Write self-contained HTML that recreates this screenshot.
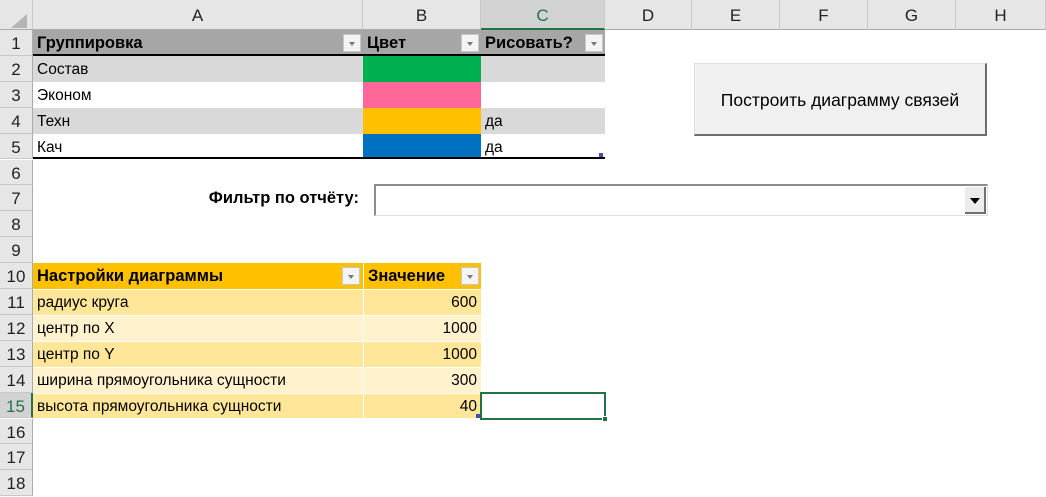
<!DOCTYPE html>
<html><head><meta charset="utf-8"><style>
*{margin:0;padding:0;box-sizing:border-box}
body{width:1046px;height:483px;overflow:hidden;background:#fff;font-family:"Liberation Sans",Arial,sans-serif;font-size:15.5px;color:#000;position:relative}
.a{position:absolute}
.ch{position:absolute;top:0;height:30px;background:#e6e6e6;border-right:1px solid #c8c8c8;border-bottom:1px solid #ababab;text-align:center;line-height:32px;font-size:17px;color:#222}
.rh{position:absolute;left:0;width:33px;height:25.9px;background:#e6e6e6;border-bottom:1px solid #c8c8c8;border-right:1px solid #ababab;text-align:center;line-height:27px;font-size:17px;color:#222}
.c{position:absolute;height:25.9px;line-height:27px;padding-left:4px;white-space:nowrap;overflow:hidden}
.b{font-weight:bold;font-size:16.5px}
.r{text-align:right;padding-right:4px}
.dd{position:absolute;width:18px;height:18px;background:#f4f4f4;border:1px solid #c8c8c8}
.dd:after{content:"";position:absolute;left:5px;top:7px;border-left:3.5px solid transparent;border-right:3.5px solid transparent;border-top:4px solid #777}
</style></head><body>
<div class="ch" style="left:0;width:33px;background:#e6e6e6"></div>
<div class="a" style="left:11px;top:14px;width:0;height:0;border-left:16px solid transparent;border-bottom:14px solid #b4b4b4"></div>
<div class="ch" style="left:33px;width:330px">A</div>
<div class="ch" style="left:363px;width:118px">B</div>
<div class="ch" style="left:481px;width:124px;background:#d2d2d2;color:#217346;border-bottom:2px solid #217346">C</div>
<div class="ch" style="left:605px;width:87px">D</div>
<div class="ch" style="left:692px;width:88px">E</div>
<div class="ch" style="left:780px;width:88px">F</div>
<div class="ch" style="left:868px;width:88px">G</div>
<div class="ch" style="left:956px;width:90px">H</div>

<div class="rh" style="top:30px">1</div>
<div class="rh" style="top:55.9px">2</div>
<div class="rh" style="top:81.8px">3</div>
<div class="rh" style="top:107.7px">4</div>
<div class="rh" style="top:133.6px">5</div>
<div class="rh" style="top:159.5px">6</div>
<div class="rh" style="top:185.4px">7</div>
<div class="rh" style="top:211.3px">8</div>
<div class="rh" style="top:237.2px">9</div>
<div class="rh" style="top:263.1px">10</div>
<div class="rh" style="top:289px">11</div>
<div class="rh" style="top:314.9px">12</div>
<div class="rh" style="top:340.8px">13</div>
<div class="rh" style="top:366.7px">14</div>
<div class="rh" style="top:392.6px;background:#d2d2d2;color:#217346;border-right:2px solid #217346">15</div>
<div class="rh" style="top:418.5px">16</div>
<div class="rh" style="top:444.4px">17</div>
<div class="rh" style="top:470.3px">18</div>

<div class="a" style="left:33px;top:30px;width:572px;height:25.9px;background:#a6a6a6"></div>
<div class="c b" style="left:33px;top:30px">Группировка</div>
<div class="c b" style="left:363px;top:30px">Цвет</div>
<div class="c b" style="left:481px;top:30px">Рисовать?</div>
<div class="dd" style="left:343px;top:34px"></div>
<div class="dd" style="left:461px;top:34px"></div>
<div class="dd" style="left:585px;top:34px"></div>
<div class="a" style="left:33px;top:54px;width:572px;height:2px;background:#000"></div>
<div class="a" style="left:33px;top:56px;width:572px;height:25.5px;background:#d9d9d9"></div>
<div class="a" style="left:33px;top:107.7px;width:572px;height:25.9px;background:#d9d9d9"></div>
<div class="a" style="left:363px;top:56px;width:118px;height:25.8px;background:#00b050"></div>
<div class="a" style="left:363px;top:81.8px;width:118px;height:25.9px;background:#ff6699"></div>
<div class="a" style="left:363px;top:107.7px;width:118px;height:25.9px;background:#ffc000"></div>
<div class="a" style="left:363px;top:133.6px;width:118px;height:24.4px;background:#0070c0"></div>
<div class="c" style="left:33px;top:55.9px">Состав</div>
<div class="c" style="left:33px;top:81.8px">Эконом</div>
<div class="c" style="left:33px;top:107.7px">Техн</div>
<div class="c" style="left:33px;top:133.6px">Кач</div>
<div class="c" style="left:481px;top:107.7px">да</div>
<div class="c" style="left:481px;top:133.6px">да</div>
<div class="a" style="left:33px;top:157px;width:572px;height:2px;background:#000"></div>
<div class="a" style="left:599px;top:153px;width:4px;height:4px;background:#4050b0"></div>

<div class="a" style="left:694px;top:63px;width:293px;height:73px;background:#f0f0f0;border-top:1px solid #e0e0e0;border-left:1px solid #e0e0e0;border-right:2px solid #6d6d6d;border-bottom:2px solid #6d6d6d;text-align:center;line-height:72px;font-size:17.5px;white-space:nowrap">Построить диаграмму связей</div>

<div class="c b" style="left:130px;top:185.4px;width:233px;text-align:right;padding-right:4px">Фильтр по отчёту:</div>
<div class="a" style="left:374px;top:184px;width:614px;height:32px;background:#fff;border-top:2px solid #8c8c8c;border-left:2px solid #8c8c8c;border-right:1px solid #e0e0e0;border-bottom:1px solid #e0e0e0"></div>
<div class="a" style="left:965px;top:187px;width:21px;height:27px;background:#ececec;border-right:2px solid #707070;border-bottom:2px solid #707070"></div>
<div class="a" style="left:970px;top:198px;width:0;height:0;border-left:5px solid transparent;border-right:5px solid transparent;border-top:6px solid #000"></div>

<div class="a" style="left:33px;top:263.1px;width:448px;height:25.9px;background:#ffc000"></div>
<div class="a" style="left:363px;top:263px;width:1px;height:156px;background:#fff"></div>
<div class="c b" style="left:33px;top:263.1px">Настройки диаграммы</div>
<div class="c b" style="left:364px;top:263.1px">Значение</div>
<div class="dd" style="left:342px;top:267px"></div>
<div class="dd" style="left:461px;top:267px"></div>
<div class="a" style="left:33px;top:289px;width:448px;height:25.9px;background:#ffe699;border-top:1px solid #fff"></div>
<div class="a" style="left:33px;top:314.9px;width:448px;height:25.9px;background:#fff2cc;border-top:1px solid #fff"></div>
<div class="a" style="left:33px;top:340.8px;width:448px;height:25.9px;background:#ffe699;border-top:1px solid #fff"></div>
<div class="a" style="left:33px;top:366.7px;width:448px;height:25.9px;background:#fff2cc;border-top:1px solid #fff"></div>
<div class="a" style="left:33px;top:392.6px;width:448px;height:25.9px;background:#ffe699;border-top:1px solid #fff"></div>
<div class="a" style="left:363px;top:289px;width:1px;height:130px;background:#fff"></div>
<div class="c" style="left:33px;top:289px">радиус круга</div>
<div class="c" style="left:33px;top:314.9px">центр по X</div>
<div class="c" style="left:33px;top:340.8px">центр по Y</div>
<div class="c" style="left:33px;top:366.7px">ширина прямоугольника сущности</div>
<div class="c" style="left:33px;top:392.6px">высота прямоугольника сущности</div>
<div class="c r" style="left:364px;top:289px;width:117px">600</div>
<div class="c r" style="left:364px;top:314.9px;width:117px">1000</div>
<div class="c r" style="left:364px;top:340.8px;width:117px">1000</div>
<div class="c r" style="left:364px;top:366.7px;width:117px">300</div>
<div class="c r" style="left:364px;top:392.6px;width:117px">40</div>
<div class="a" style="left:476px;top:414px;width:4px;height:4px;background:#4050b0"></div>

<div class="a" style="left:480px;top:392px;width:126px;height:28px;border:2px solid #217346"></div>
<div class="a" style="left:602px;top:416px;width:6px;height:6px;background:#217346;border:1px solid #fff"></div>
</body></html>
